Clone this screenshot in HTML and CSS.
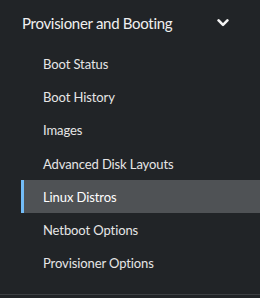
FILE: index.html
```html
<!DOCTYPE html>
<html>
<head>
<meta charset="utf-8">
<link rel="stylesheet" href="styles.css">
</head>
<body>
<nav class="nav">
  <section class="group">
    <button class="group-toggle">
      <span class="group-title">Provisioner and Booting</span>
      <svg class="chevron" width="12" height="10" viewBox="0 0 12 10"><path d="M1.6 2.4 L6 6.8 L10.4 2.4" fill="none" stroke="#f4f4f4" stroke-width="2.6" stroke-linecap="round" stroke-linejoin="round"/></svg>
    </button>
    <ul class="items">
      <li class="item">Boot Status</li>
      <li class="item">Boot History</li>
      <li class="item">Images</li>
      <li class="item">Advanced Disk Layouts</li>
      <li class="item active">Linux Distros</li>
      <li class="item">Netboot Options</li>
      <li class="item">Provisioner Options</li>
    </ul>
  </section>
</nav>
</body>
</html>
```
FILE: styles.css
```css
html, body {
  margin: 0;
  padding: 0;
  background: #212427;
  width: 260px;
  height: 298px;
  overflow: hidden;
}
.nav {
  font-family: Lato, "Liberation Sans", sans-serif;
  color: #e6e6e6;
}
.group {
  border-bottom: 1px solid #3c3f42;
  height: 294px;
}
.group-toggle {
  display: flex;
  align-items: center;
  justify-content: space-between;
  width: 100%;
  background: none;
  border: 0;
  padding: 0 31px 1px 22px;
  height: 47px;
  color: #f0f0f0;
  font: inherit;
  font-size: 15px;
  letter-spacing: -0.3px;
}
.chevron { display: block; }
.items {
  list-style: none;
  margin: 0;
  padding: 0 0 0 21px;
}
.item {
  height: 33.3px;
  display: flex;
  align-items: center;
  padding-left: 19px;
  font-size: 13px;
  letter-spacing: -0.1px;
  border-left: 3px solid transparent;
}
.item.active {
  background: #4f5255;
  border-left-color: #73bcf7;
  color: #ffffff;
}
```
